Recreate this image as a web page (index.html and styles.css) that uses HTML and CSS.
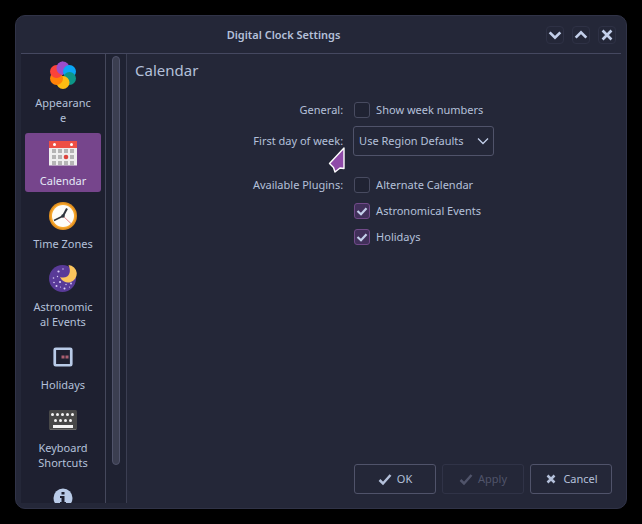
FILE: index.html
```html
<!DOCTYPE html>
<html lang="en">
<head>
<meta charset="utf-8">
<title>Digital Clock Settings</title>
<link rel="stylesheet" href="styles.css">
</head>
<body>
<div class="window">
  <header class="titlebar">
    <h1 class="title">Digital Clock Settings</h1>
    <div class="controls">
      <button class="control" type="button" aria-label="Minimize"><svg viewBox="0 0 18 18"><path d="M3 6L9 12L15 6"/></svg></button>
      <button class="control" type="button" aria-label="Maximize"><svg viewBox="0 0 18 18"><path d="M3 12L9 6L15 12"/></svg></button>
      <button class="control" type="button" aria-label="Close"><svg viewBox="0 0 18 18"><path d="M4 4L14 14M14 4L4 14"/></svg></button>
    </div>
  </header>
  <div class="body">
    <nav class="sidebar">
      <a class="item" href="#appearance">
        <svg class="icon" viewBox="0 0 28 28">
          <circle cx="14" cy="7" r="6.500" fill="#9b4dca"/>
          <circle cx="20.500" cy="10.500" r="6.500" fill="#0aa5f5"/>
          <circle cx="20.500" cy="17.500" r="6.500" fill="#0d9688"/>
          <circle cx="14" cy="21.500" r="6.500" fill="#fdbc12"/>
          <circle cx="7.500" cy="17.500" r="6.500" fill="#ff8208"/>
          <circle cx="7.500" cy="10.500" r="6.500" fill="#fb4339"/>
          <path d="M14 14C10 13.500 7.500 11 7.500 7A6.500 6.500 0 0 1 14 .5z" fill="#9b4dca"/>
        </svg>
        <span>Appearance</span>
      </a>
      <a class="item selected" href="#calendar">
        <svg class="icon" viewBox="0 0 28 28">
          <path d="M0 8h28v18.500H0z" fill="#efefef"/>
          <path d="M0 2h28v7H0z" fill="#ee4f45"/>
          <circle cx="5.500" cy="5.500" r="1.500" fill="#fff"/><circle cx="22.500" cy="5.500" r="1.500" fill="#fff"/>
          <path d="M3 10h4v4H3zm6 0h4v4H9zm6 0h4v4h-4zm6 0h4v4h-4zM3 16h4v4H3zm6 0h4v4H9zm12 0h4v4h-4zM3 22h4v4H3zm6 0h4v4H9zm6 0h4v4h-4zm6 0h4v4h-4z" fill="#b5b5b5"/>
          <circle cx="17" cy="18" r="2.300" fill="#dc453d"/>
        </svg>
        <span>Calendar</span>
      </a>
      <a class="item" href="#time-zones">
        <svg class="icon" viewBox="0 0 28 28">
          <circle cx="14" cy="14" r="14" fill="#e2901f"/>
          <circle cx="14" cy="14" r="12.500" fill="#f6a62c"/>
          <circle cx="14" cy="14" r="11" fill="#fdfcf9"/>
          <path d="M14 14L22.500 22" stroke="#e9858b"/>
          <path d="M14 14L5 18.500" stroke="#30343c" stroke-width="1.500"/>
          <path d="M14 14L18 6.500" stroke="#30343c" stroke-width="2"/>
          <circle cx="14" cy="14" r="1.800" fill="#30343c"/>
        </svg>
        <span>Time Zones</span>
      </a>
      <a class="item" href="#astronomical-events">
        <svg class="icon" viewBox="0 0 28 28">
          <circle cx="13.500" cy="13.500" r="13.500" fill="#593a98"/>
          <g fill="#d9cdf5"><circle cx="9.500" cy="6.500" r="1.100"/><circle cx="4.500" cy="13" r=".8"/><circle cx="11" cy="17" r="1.100"/><circle cx="5" cy="17.500" r=".8"/><circle cx="7.500" cy="21" r="1"/><circle cx="15.500" cy="23.500" r="1"/><circle cx="22" cy="18.500" r=".9"/><circle cx="17" cy="19.500" r=".7"/><circle cx="14" cy="4" r=".7"/><circle cx="8.500" cy="11.500" r=".7"/><circle cx="11.500" cy="22" r=".6"/><circle cx="20.500" cy="22" r=".6"/></g>
          <path d="M19.500 0A8.700 8.700 0 1 1 11 12C15 13.500 19.500 12 20.500 8C21.300 5 20.500 2.500 19.500 0z" fill="#fbc55d"/>
        </svg>
        <span>Astronomical Events</span>
      </a>
      <a class="item" href="#holidays">
        <svg class="icon" viewBox="0 0 28 28">
          <rect x="5.750" y="5.750" width="16.500" height="16.500" rx="1" fill="none" stroke="#b9cbe8" stroke-width="2.700"/>
          <path d="M12.500 12.500h3v3h-3zm4 0h3v3h-3z" fill="#aa5f70"/>
        </svg>
        <span>Holidays</span>
      </a>
      <a class="item" href="#keyboard-shortcuts">
        <svg class="icon" viewBox="0 0 28 28">
          <rect y="4" width="28" height="20" rx="1.500" fill="#484848"/>
          <path d="M1 23.500h26" stroke="#6a6a6a"/>
          <path d="M4 19h20v3H4z" fill="#f5f5f5"/>
          <g fill="#f5f5f5"><circle cx="3.500" cy="8.500" r="1.500"/><circle cx="8.500" cy="8.500" r="1.500"/><circle cx="13.500" cy="8.500" r="1.500"/><circle cx="18.500" cy="8.500" r="1.500"/><circle cx="23.500" cy="8.500" r="1.500"/><circle cx="6.500" cy="14.500" r="1.500"/><circle cx="11.500" cy="14.500" r="1.500"/><circle cx="16.500" cy="14.500" r="1.500"/><circle cx="21.500" cy="14.500" r="1.500"/></g>
        </svg>
        <span>Keyboard Shortcuts</span>
      </a>
      <a class="item" href="#about" aria-label="About">
        <svg class="icon" viewBox="0 0 28 28">
          <circle cx="14" cy="14" r="9.500" fill="#b9cbe8"/>
          <path d="M12.500 8h3v2.500h-3zM11 12h4.500v6H17v2h-6v-2h1.500v-4H11z" fill="#1e2030"/>
        </svg>
      </a>
    </nav>
    <div class="track"><div class="thumb"></div></div>
    <main class="main">
      <h2 class="heading">Calendar</h2>
      <form class="form">
        <span class="label">General:</span>
        <label class="check"><input type="checkbox">Show week numbers</label>
        <label class="label" for="first-day">First day of week:</label>
        <select class="select" id="first-day"><option>Use Region Defaults</option></select>
        <span class="label plugins">Available Plugins:</span>
        <div class="checks plugins">
          <label class="check"><input type="checkbox">Alternate Calendar</label>
          <label class="check"><input type="checkbox" checked>Astronomical Events</label>
          <label class="check"><input type="checkbox" checked>Holidays</label>
        </div>
      </form>
      <footer class="footer">
        <button class="button" type="button"><svg viewBox="0 0 14 14"><path d="M1.500 8L5 11.500L12.500 3"/></svg>OK</button>
        <button class="button" type="button" disabled><svg viewBox="0 0 14 14"><path d="M1.500 8L5 11.500L12.500 3"/></svg>Apply</button>
        <button class="button" type="button"><svg viewBox="0 0 14 14"><path d="M3.500 3.500L10.500 10.500M10.500 3.500L3.500 10.500"/></svg>Cancel</button>
      </footer>
    </main>
  </div>
</div>
<svg class="pointer" viewBox="0 0 18 28"><path d="M16 2V22.500L12 22L7 26L5.500 21.500L1.500 17.500z" fill="#8f4aa8" stroke="#fff" stroke-width="1.400" stroke-linejoin="round"/></svg>
</body>
</html>
```
FILE: styles.css
```css
* {
  box-sizing: border-box;
}

body {
  margin: 0;
  height: 100vh;
  padding: 15px;
  background: #000;
  color: #b4c0da;
  font: 11px/15px "Noto Sans", sans-serif;
}

button,
select,
input {
  margin: 0;
  color: inherit;
  font: inherit;
}

.window {
  display: flex;
  flex-direction: column;
  height: 100%;
  padding: 0 5px 5px;
  border: 1px solid #303347;
  border-radius: 10px;
  background: #242738;
}

.titlebar {
  display: flex;
  flex: none;
  align-items: center;
  height: 38px;
  border-bottom: 1px solid #454860;
}

.title {
  flex: 1;
  margin: 0;
  font-size: 11px;
  font-weight: 600;
  text-align: center;
}

.controls {
  display: flex;
  gap: 8px;
  padding-right: 5px;
}

.control {
  width: 18px;
  height: 18px;
  padding: 0;
  border: 1px solid #2e3145;
  border-radius: 4px;
  background: none;
}

.control svg {
  display: block;
  width: 16px;
  height: 16px;
  fill: none;
  stroke: #c3cfea;
  stroke-width: 3;
}

.body {
  display: flex;
  flex: 1;
  min-height: 0;
}

.sidebar {
  display: flex;
  flex: none;
  flex-direction: column;
  gap: 4px;
  width: 85px;
  padding: 1px 4px 0;
  overflow: hidden;
  border-right: 1px solid #45485c;
  background: #1e2030;
}

.item {
  display: flex;
  flex: none;
  flex-direction: column;
  align-items: center;
  gap: 6px;
  padding: 6px 8px 4px;
  border-radius: 3px;
  color: inherit;
  text-align: center;
  text-decoration: none;
  overflow-wrap: anywhere;
}

.selected {
  background: #76458c;
  color: #e4e8f7;
}

.icon {
  width: 28px;
  height: 28px;
  fill: none;
}

.track {
  flex: none;
  width: 21px;
  padding: 2px 6px;
  border-right: 1px solid #3b3e52;
  background: #1f2232;
}

.thumb {
  width: 8px;
  height: 92%;
  border: 1px solid #50536a;
  border-radius: 4px;
  background: #3b3e50;
}

.main {
  display: flex;
  flex: 1;
  flex-direction: column;
  padding: 6px 9px 9px 8px;
  line-height: 14px;
}

.heading {
  margin: 0;
  font-size: 15px;
  font-weight: 400;
  line-height: 20px;
}

.form {
  display: grid;
  grid-template-columns: auto auto;
  align-items: center;
  justify-content: center;
  gap: 8px 10px;
  margin-top: 22px;
}

.label {
  line-height: 16px;
  text-align: right;
}

.plugins {
  align-self: start;
  margin-top: 13px;
}

.checks {
  display: flex;
  flex-direction: column;
  gap: 10px;
}

.check {
  display: flex;
  align-items: center;
  gap: 6px;
  height: 16px;
  padding-left: 1px;
}

.check input {
  width: 16px;
  height: 16px;
  appearance: none;
  border: 1px solid #484b60;
  border-radius: 3px;
  background: #202333;
}

.check input:checked {
  border-color: #714a89;
  background: #41305a url("data:image/svg+xml,%3Csvg xmlns='http://www.w3.org/2000/svg' viewBox='0 0 14 14'%3E%3Cpath d='M2.500 7L6 10.300L11.500 4.300' fill='none' stroke='%23c3cfea' stroke-width='2.200'/%3E%3C/svg%3E");
}

.select {
  width: 141px;
  height: 30px;
  padding: 0 24px 0 5px;
  appearance: none;
  border: 1px solid #50536a;
  border-radius: 3px;
  background: url("data:image/svg+xml,%3Csvg xmlns='http://www.w3.org/2000/svg' viewBox='0 0 12 8'%3E%3Cpath d='M1 1.500L6 6.500L11 1.500' fill='none' stroke='%23c3cfea' stroke-width='1.300'/%3E%3C/svg%3E") right 4px center / 12px 8px no-repeat;
}

.footer {
  display: flex;
  justify-content: flex-end;
  gap: 6px;
  margin-top: auto;
}

.button {
  display: flex;
  align-items: center;
  justify-content: center;
  gap: 5px;
  width: 82px;
  height: 30px;
  padding: 0;
  border: 1px solid #50536a;
  border-radius: 3px;
  background: none;
}

.button:disabled {
  border-color: #303347;
  color: #50546a;
}

.button svg {
  width: 14px;
  height: 14px;
  fill: none;
  stroke: currentColor;
  stroke-width: 2.5;
}

.pointer {
  position: absolute;
  top: 146px;
  left: 328px;
  width: 18px;
  height: 28px;
}
```
